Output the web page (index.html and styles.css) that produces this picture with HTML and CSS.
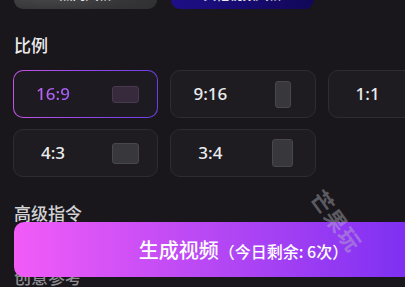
FILE: index.html
```html
<!DOCTYPE html>
<html lang="zh">
<head>
<meta charset="utf-8">
<link rel="stylesheet" href="styles.css">
</head>
<body>
<div class="page">
  <div class="styles">
    <div class="style-btn style-hot">热门风格</div>
    <div class="style-btn style-more">其他视频风格</div>
  </div>

  <h2 class="section-title">比例</h2>
  <div class="ratio-grid">
    <div class="ratio-card active">
      <span class="ratio-label">16:9</span>
      <span class="ratio-icon-box"><span class="ratio-icon r169"></span></span>
    </div>
    <div class="ratio-card">
      <span class="ratio-label">9:16</span>
      <span class="ratio-icon-box"><span class="ratio-icon r916"></span></span>
    </div>
    <div class="ratio-card">
      <span class="ratio-label">1:1</span>
      <span class="ratio-icon-box"><span class="ratio-icon r11"></span></span>
    </div>
    <div class="ratio-card">
      <span class="ratio-label">4:3</span>
      <span class="ratio-icon-box"><span class="ratio-icon r43"></span></span>
    </div>
    <div class="ratio-card">
      <span class="ratio-label">3:4</span>
      <span class="ratio-icon-box"><span class="ratio-icon r34"></span></span>
    </div>
  </div>

  <h2 class="section-title adv">高级指令</h2>
  <h2 class="section-title ref">创意参考</h2>
</div>

<div class="generate-btn">
  <span class="gen-main">生成视频</span><span class="gen-sub">（今日剩余: 6次）</span>
</div>

<div class="watermark">芒果玩</div>
</body>
</html>
```

FILE: styles.css
```css
html, body {
  margin: 0;
  padding: 0;
  background: #19171c;
  overflow: hidden;
  width: 405px;
  height: 287px;
}

body {
  font-family: "Noto Sans", "Noto Sans CJK SC", sans-serif;
  color: #e6e6e8;
  position: relative;
}

.page {
  width: 460px;
  padding-left: 13px;
}

.styles {
  display: flex;
  gap: 14px;
  margin-top: -25px;
  padding-left: 1px;
}

.style-btn {
  width: 143px;
  height: 34px;
  border-radius: 9px;
  display: flex;
  justify-content: center;
  align-items: flex-start;
  padding-top: 10px;
  box-sizing: border-box;
  font-family: "Noto Sans CJK SC", sans-serif;
  font-size: 13px;
  line-height: 18px;
  font-weight: 500;
  color: #e8e8ea;
}

.style-hot {
  background: radial-gradient(ellipse at 25% 60%, #4a4a4c 0%, #353537 55%, #2c2c2e 100%);
}

.style-more {
  background: linear-gradient(90deg, #1e0f86 0%, #170a70 50%, #120858 100%);
}

.section-title {
  margin: 24px 0 0 1px;
  font-family: "Noto Sans CJK SC", sans-serif;
  font-size: 17px;
  line-height: 24px;
  font-weight: 500;
  color: #ececee;
}

.ratio-grid {
  margin-top: 13px;
  display: grid;
  grid-template-columns: repeat(3, 1fr);
  column-gap: 12px;
  row-gap: 11px;
}

.ratio-card {
  height: 48px;
  box-sizing: border-box;
  border: 1px solid #2e2c32;
  border-radius: 10px;
  background: #1e1c21;
  display: flex;
  align-items: center;
  padding-left: 14px;
  padding-right: 15px;
}

.ratio-card.active {
  border: 1px solid transparent;
  background:
    linear-gradient(#1d1a22, #1d1a22) padding-box,
    linear-gradient(90deg, #c453e6 0%, #8a46e8 60%, #6b3fe6 100%) border-box;
}

.ratio-label {
  width: 50px;
  text-align: center;
  font-size: 17px;
  font-weight: 500;
  color: #ececee;
  line-height: 22px;
}

.active .ratio-label {
  background: linear-gradient(90deg, #c364f2, #9a5cf4);
  -webkit-background-clip: text;
  background-clip: text;
  color: transparent;
}

.ratio-icon-box {
  margin-left: auto;
  width: 34px;
  display: flex;
  justify-content: center;
  align-items: center;
}

.ratio-icon {
  display: block;
  box-sizing: border-box;
  border-radius: 3px;
  background: #38383c;
  border: 1px solid #48484c;
}

.r169 { width: 27px; height: 17px; background: #362a3c; border-color: #463a4c; }
.r916 { width: 16px; height: 27px; }
.r11 { width: 22px; height: 22px; }
.r43 { width: 27px; height: 21px; }
.r34 { width: 21px; height: 28px; }

.section-title.adv {
  margin-top: 24px;
  color: #d2d2d4;
}

.section-title.ref {
  margin-top: 40px;
  color: #8e8e92;
}

.generate-btn {
  position: absolute;
  left: 14px;
  top: 222px;
  width: 459px;
  height: 55px;
  border-radius: 10px;
  background: linear-gradient(90deg, #f25cf8 0%, #b447f4 45%, #7f30f2 85%, #7428ee 100%);
  display: flex;
  justify-content: center;
  align-items: center;
  color: #ffffff;
  font-family: "Noto Sans CJK SC", sans-serif;
}

.gen-main {
  font-size: 20px;
  font-weight: 500;
  line-height: 28px;
}

.gen-sub {
  font-size: 16px;
  font-weight: 500;
  line-height: 28px;
  padding-top: 2px;
}

.watermark {
  position: absolute;
  left: 303px;
  top: 204px;
  font-family: "Noto Sans CJK SC", sans-serif;
  font-size: 22px;
  font-weight: 700;
  letter-spacing: 1px;
  color: rgba(190, 190, 200, 0.42);
  transform: rotate(54deg);
  transform-origin: center;
  white-space: nowrap;
}
```
